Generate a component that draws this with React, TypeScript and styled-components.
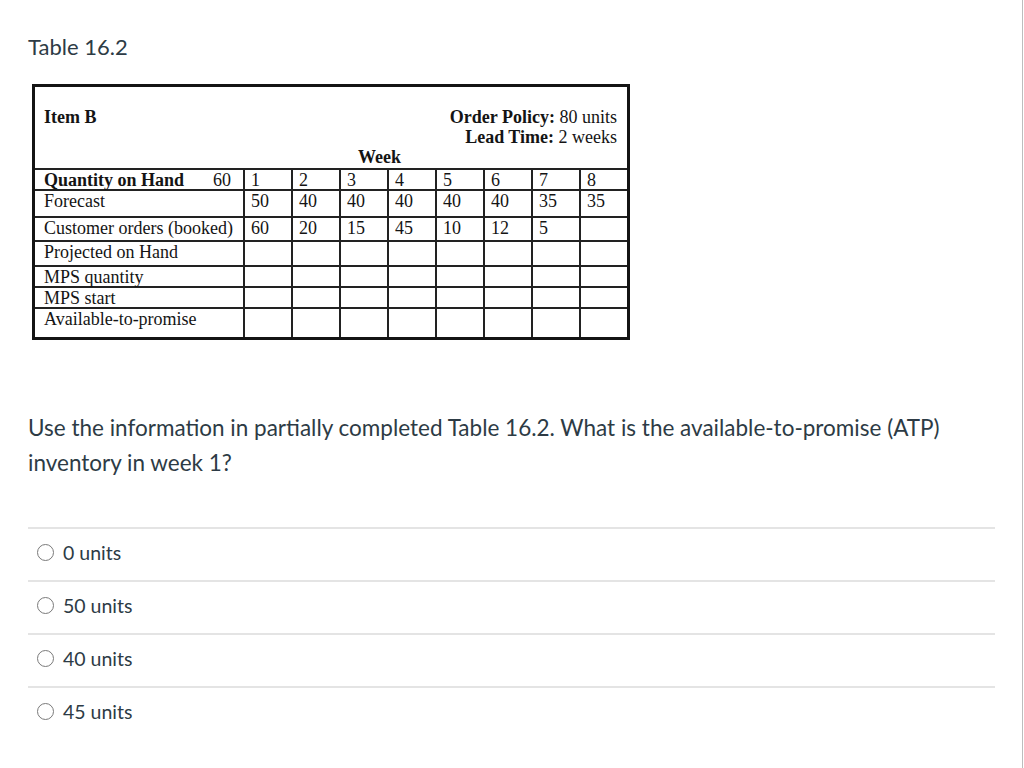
import React from "react";
import styled, { createGlobalStyle } from "styled-components";

const Global = createGlobalStyle`
  html, body { margin: 0; padding: 0; background: #ffffff; }
  body { font-family: Lato, "Open Sans", sans-serif; color: #2d3b45; }
`;

const Page = styled.div`
  box-sizing: border-box;
  width: 1023px;
  min-height: 768px;
  border-right: 1px solid #bdbdbd;
  padding: 32px 0 0 28px;
`;

const Title = styled.h2`
  margin: 0;
  font-size: 22px;
  line-height: 30px;
  font-weight: 400;
  color: #2d3b45;
`;

const MpsTable = styled.div`
  margin: 22px 0 0 4px;
  display: grid;
  width: max-content;
  grid-template-columns: 208px repeat(8, 46px);
  grid-template-rows: 81px 19px 25px 22px 23px 19px 19px 28px;
  gap: 2px;
  background: #222;
  border: 3px solid #141414;
  font-family: "Liberation Serif", "Times New Roman", serif;
  font-size: 18px;
  color: #141414;
`;

const Cell = styled.div`
  background: #fff;
  line-height: 20px;
  padding: 0 0 0 6px;
  white-space: nowrap;
`;

const Label = styled(Cell)`
  padding-left: 9px;
`;

const SplitLabel = styled(Label)`
  display: flex;
  justify-content: space-between;
  padding-right: 12px;
`;

const Header = styled.div`
  grid-column: 1 / -1;
  background: #fff;
  padding: 20px 10px 0 9px;
  display: flex;
  flex-direction: column;
  line-height: 20px;
`;

const HeaderTop = styled.div`
  display: flex;
  justify-content: space-between;
  align-items: flex-start;
`;

const Policy = styled.div`
  text-align: right;
`;

const Week = styled.div`
  padding-left: 314px;
  font-weight: 700;
`;

const Bold = styled.b`
  font-weight: 700;
`;

const Question = styled.p`
  margin: 70px 0 0 0;
  max-width: 960px;
  font-size: 22.5px;
  line-height: 35px;
  color: #2d3b45;
`;

const Answers = styled.div`
  margin-top: 47px;
  width: 967px;
`;

const Answer = styled.label`
  display: flex;
  align-items: center;
  box-sizing: border-box;
  height: 53px;
  padding-bottom: 4px;
  border-top: 2px solid #e4e4e4;
  font-size: 19.5px;
  color: #2d3b45;
`;

const Radio = styled.span`
  box-sizing: border-box;
  width: 17px;
  height: 17px;
  margin: 0 9px 0 9px;
  border: 1.5px solid #7a7a7a;
  border-radius: 50%;
  background: #fff;
  flex-shrink: 0;
`;

const rows: { label: string; values: string[] }[] = [
  { label: "Forecast", values: ["50", "40", "40", "40", "40", "40", "35", "35"] },
  { label: "Customer orders (booked)", values: ["60", "20", "15", "45", "10", "12", "5", ""] },
  { label: "Projected on Hand", values: ["", "", "", "", "", "", "", ""] },
  { label: "MPS quantity", values: ["", "", "", "", "", "", "", ""] },
  { label: "MPS start", values: ["", "", "", "", "", "", "", ""] },
  { label: "Available-to-promise", values: ["", "", "", "", "", "", "", ""] },
];

const answers = ["0 units", "50 units", "40 units", "45 units"];

export default function App() {
  return (
    <>
      <Global />
      <Page>
        <Title>Table 16.2</Title>
        <MpsTable>
          <Header>
            <HeaderTop>
              <Bold>Item B</Bold>
              <Policy>
                <div>
                  <Bold>Order Policy:</Bold> 80 units
                </div>
                <div>
                  <Bold>Lead Time:</Bold> 2 weeks
                </div>
              </Policy>
            </HeaderTop>
            <Week>Week</Week>
          </Header>
          <SplitLabel>
            <Bold>Quantity on Hand</Bold>
            <span>60</span>
          </SplitLabel>
          {[1, 2, 3, 4, 5, 6, 7, 8].map((w) => (
            <Cell key={w}>{w}</Cell>
          ))}
          {rows.map((r) => (
            <React.Fragment key={r.label}>
              <Label>{r.label}</Label>
              {r.values.map((v, i) => (
                <Cell key={i}>{v}</Cell>
              ))}
            </React.Fragment>
          ))}
        </MpsTable>
        <Question>
          Use the information in partially completed Table 16.2. What is the available-to-promise (ATP)
          inventory in week 1?
        </Question>
        <Answers>
          {answers.map((a) => (
            <Answer key={a}>
              <Radio />
              {a}
            </Answer>
          ))}
        </Answers>
      </Page>
    </>
  );
}
